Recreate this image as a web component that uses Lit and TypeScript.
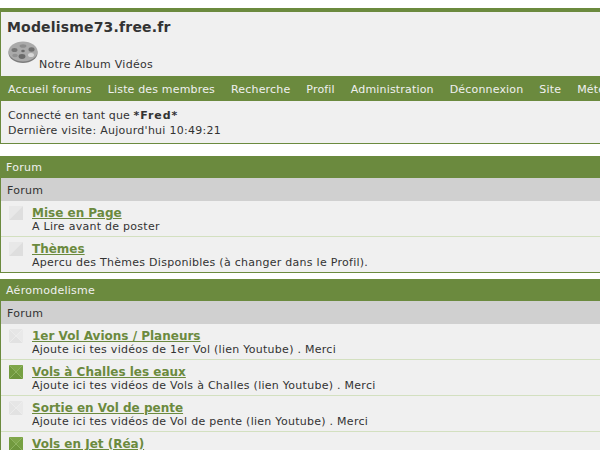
import { LitElement, html, css, svg } from "lit";
import { customElement } from "lit/decorators.js";

const sections = [
  { name: "Forum", rows: [
    { t: "Mise en Page", d: "A Lire avant de poster", on: false, split: true },
    { t: "Thèmes", d: "Apercu des Thèmes Disponibles (à changer dans le Profil).", on: false, split: true },
  ]},
  { name: "Aéromodelisme", rows: [
    { t: "1er Vol Avions / Planeurs", d: "Ajoute ici tes vidéos de 1er Vol (lien Youtube) . Merci", on: false, split: false },
    { t: "Vols à Challes les eaux", d: "Ajoute ici tes vidéos de Vols à Challes (lien Youtube) . Merci", on: true, split: false },
    { t: "Sortie en Vol de pente", d: "Ajoute ici tes vidéos de Vol de pente (lien Youtube) . Merci", on: false, split: false },
    { t: "Vols en Jet (Réa)", d: "Ajoute ici tes vidéos de Vols en Jet (lien Youtube) . Merci", on: true, split: false },
  ]},
];
const nav = ["Accueil forums", "Liste des membres", "Recherche", "Profil", "Administration", "Déconnexion", "Site", "Météo"];

const reel = svg`<svg class="logo" viewBox="0 0 30 24" width="30" height="24" aria-hidden="true">
  <ellipse cx="15" cy="13" rx="14.5" ry="10" fill="#7c7c7c"/>
  <ellipse cx="15" cy="11.5" rx="14.5" ry="10" fill="#aaa"/>
  <ellipse cx="6.5" cy="10" rx="3" ry="2" fill="#767676"/>
  <ellipse cx="23.5" cy="9.5" rx="3" ry="2.2" fill="#707070"/>
  <ellipse cx="14" cy="16.5" rx="3.4" ry="2.4" fill="#6a6a6a"/>
  <ellipse cx="23" cy="15" rx="3" ry="2" fill="#d8d8d8"/>
  <ellipse cx="7" cy="15.5" rx="2.8" ry="1.8" fill="#929292"/>
  <ellipse cx="15" cy="6" rx="3.4" ry="1.8" fill="#8c8c8c"/>
  <ellipse cx="15" cy="11" rx="1.8" ry="1.2" fill="#6a6a6a"/>
</svg>`;

const marker = (on: boolean, split: boolean) => {
  if (split) {
    return svg`<svg class="mark" viewBox="0 0 14 14" width="14" height="14" aria-hidden="true">
      <polygon points="0,0 14,0 0,14" fill="#e8e8e8"/>
      <polygon points="14,0 14,14 0,14" fill="#dedede"/>
    </svg>`;
  }
  const c = on
    ? ["#7fa64a", "#76a042", "#6d953c", "#729a3f"]
    : ["#e6e6e6", "#e9e9e9", "#e2e2e2", "#e4e4e4"];
  const line = on ? "#8db35a" : "#eeeeee";
  return svg`<svg class="mark" viewBox="0 0 14 14" width="14" height="14" aria-hidden="true">
    <polygon points="0,0 14,0 7,7" fill=${c[0]}/>
    <polygon points="14,0 14,14 7,7" fill=${c[1]}/>
    <polygon points="0,14 14,14 7,7" fill=${c[2]}/>
    <polygon points="0,0 0,14 7,7" fill=${c[3]}/>
    <path d="M0 0L14 14M14 0L0 14" stroke=${line} stroke-width="0.7"/>
  </svg>`;
};

@customElement("app-root")
export class AppRoot extends LitElement {
  static styles = css`
    :host { display: block; height: 450px; overflow: hidden; background: #fff;
      font-family: Verdana, "DejaVu Sans", sans-serif; font-size: 11px; letter-spacing: 0.27px; color: #333; }
    .top { margin-top: 8px; border-top: 4px solid #6b8a3e; border-left: 1px solid #6b8a3e;
      border-bottom: 1px solid #6b8a3e; background: #f0f0f0; }
    .brand { height: 64px; padding: 0 0 0 7px; box-sizing: border-box; }
    h1 { margin: 0; padding-top: 6px; font-size: 14px; letter-spacing: 0.18px; line-height: 19px; font-weight: bold; color: #333; margin-left: -1px; }
    .album { display: flex; align-items: flex-end; margin-top: 3px; height: 24px; }
    .album span { line-height: 13px; margin-left: 1px; margin-bottom: -7px; }
    .logo { display: block; flex: none; filter: blur(0.4px); }
    nav { display: flex; gap: 16px; height: 25px; align-items: center; padding: 1px 0 0 8px; box-sizing: border-box; margin-left: -1px;
      background: #6b8a3e; color: #f0f0f0; white-space: nowrap; overflow: hidden; letter-spacing: 0.17px; }
    .info { padding: 7px 7px 6px; line-height: 15px; height: 29px; }
    .who { letter-spacing: 0.12px; }
    .info b { font-weight: bold; letter-spacing: 0.94px; }
    section { margin-top: 12px; }
    section + section { margin-top: 6px; }
    .head { height: 22px; line-height: 23px; background: #6b8a3e; color: #f0f0f0; padding-left: 6px; }
    .body { border-left: 1px solid #6b8a3e; border-bottom: 1px solid #6b8a3e; background: #f0f0f0; }
    .sub { height: 23px; line-height: 25px; background: #d0d0d0; padding-left: 6px; color: #333; }
    .row { display: flex; height: 35px; border-bottom: 1px solid #d3e0c0; }
    .row:last-child { border-bottom: none; }
    .mark { flex: none; margin: 5px 0 0 8px; }
    .text { margin-left: 9px; padding-top: 5px; }
    .title { display: block; font-size: 12px; letter-spacing: 0; line-height: 15px; font-weight: bold; color: #6b8a3e; text-decoration: underline; }
    .desc { display: block; line-height: 12px; white-space: nowrap; }
  `;
  render() {
    return html`
      <div class="top">
        <div class="brand">
          <h1>Modelisme73.free.fr</h1>
          <div class="album">${reel}<span>Notre Album Vidéos</span></div>
        </div>
        <nav>${nav.map((n) => html`<span>${n}</span>`)}</nav>
        <div class="info"><span class="who">Connecté en tant que </span><b>*Fred*</b><br />Dernière visite: Aujourd'hui 10:49:21</div>
      </div>
      ${sections.map((s) => html`
        <section>
          <div class="head">${s.name}</div>
          <div class="body">
            <div class="sub">Forum</div>
            ${s.rows.map((r) => html`
              <div class="row">
                ${marker(r.on, r.split)}
                <div class="text"><a class="title">${r.t}</a><span class="desc">${r.d}</span></div>
              </div>`)}
          </div>
        </section>`)}
    `;
  }
}
